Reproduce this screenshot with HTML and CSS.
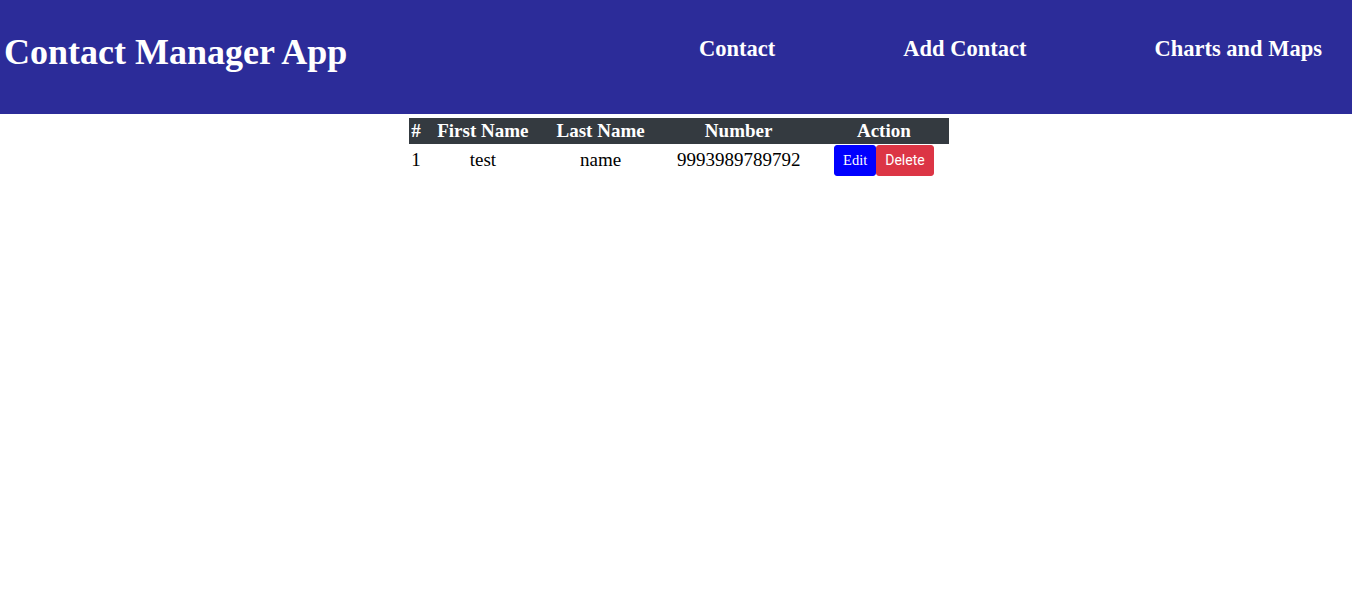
FILE: index.html
```html
<!DOCTYPE html>
<html>
<head>
<meta charset="utf-8">
<link rel="stylesheet" href="styles.css">
</head>
<body>
<header class="topbar">
  <h1 class="title">Contact Manager App</h1>
  <nav class="nav">
    <a class="nav-link" href="#">Contact</a>
    <a class="nav-link" href="#">Add Contact</a>
    <a class="nav-link" href="#">Charts and Maps</a>
  </nav>
</header>
<main class="content">
  <table class="contacts">
    <thead>
      <tr>
        <th class="c-idx">#</th>
        <th>First Name</th>
        <th>Last Name</th>
        <th>Number</th>
        <th>Action</th>
      </tr>
    </thead>
    <tbody>
      <tr>
        <td class="c-idx">1</td>
        <td>test</td>
        <td>name</td>
        <td>9993989789792</td>
        <td class="actions"><button class="btn btn-edit">Edit</button><button class="btn btn-delete">Delete</button></td>
      </tr>
    </tbody>
  </table>
</main>
</body>
</html>
```

FILE: styles.css
```css
html, body {
  margin: 0;
  padding: 0;
  background: #ffffff;
  font-family: "Liberation Serif", "Times New Roman", serif;
}
.topbar {
  height: 114px;
  background: #2c2c99;
  display: flex;
  align-items: flex-start;
  justify-content: space-between;
  color: #ffffff;
}
.title {
  margin: 30px 0 0 4px;
  font-size: 36px;
  line-height: 44px;
  font-weight: bold;
}
.nav {
  display: flex;
  gap: 128px;
  padding: 35px 30px 0 0;
}
.nav-link {
  color: #ffffff;
  text-decoration: none;
  font-weight: bold;
  font-size: 22.5px;
  line-height: 28px;
}
.content {
  padding-top: 4px;
}
.contacts {
  width: 540px;
  margin: 0 0 0 409px;
  border-collapse: collapse;
  font-size: 19px;
}
.contacts th {
  background: #343a40;
  color: #ffffff;
  font-weight: bold;
  height: 26px;
  padding: 0 2px;
  line-height: 22px;
  text-align: center;
}
.contacts td {
  padding: 0 2px 1px;
  text-align: center;
  line-height: 30px;
  height: 32px;
}
.c-idx {
  width: 10px;
}
.actions {
  white-space: nowrap;
}
.btn {
  height: 31px;
  border: 1px solid transparent;
  border-radius: 3px;
  color: #ffffff;
  padding: 0 8px 1px;
  font-size: 14px;
  vertical-align: middle;
  cursor: pointer;
}
.btn-edit {
  background: #0000ff;
  border-color: #0000ff;
  font-family: "Liberation Serif", serif;
  font-size: 14.5px;
}
.btn-delete {
  background: #dc3545;
  border-color: #dc3545;
  font-family: Roboto, "Liberation Sans", sans-serif;
}
```
